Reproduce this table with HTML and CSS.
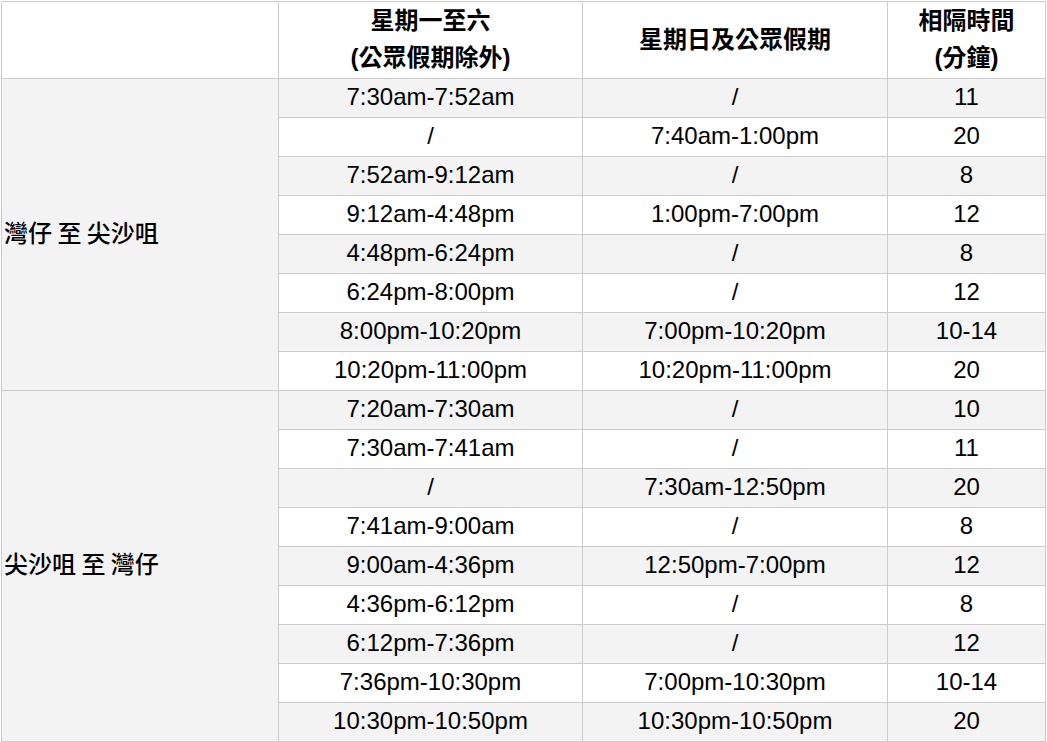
FILE: index.html
```html
<!DOCTYPE html>
<html lang="zh-Hant">
<head>
<meta charset="utf-8">
<title>渡輪班次</title>
<link rel="stylesheet" href="styles.css">
</head>
<body>
<table class="schedule">
  <colgroup>
    <col class="c-route">
    <col class="c-week">
    <col class="c-sun">
    <col class="c-gap">
  </colgroup>
  <thead>
    <tr>
      <th></th>
      <th>星期一至六<br>(公眾假期除外)</th>
      <th>星期日及公眾假期</th>
      <th>相隔時間<br>(分鐘)</th>
    </tr>
  </thead>
  <tbody>
    <tr class="odd"><td class="route" rowspan="8">灣仔 至 尖沙咀</td><td>7:30am-7:52am</td><td>/</td><td>11</td></tr>
    <tr><td>/</td><td>7:40am-1:00pm</td><td>20</td></tr>
    <tr class="odd"><td>7:52am-9:12am</td><td>/</td><td>8</td></tr>
    <tr><td>9:12am-4:48pm</td><td>1:00pm-7:00pm</td><td>12</td></tr>
    <tr class="odd"><td>4:48pm-6:24pm</td><td>/</td><td>8</td></tr>
    <tr><td>6:24pm-8:00pm</td><td>/</td><td>12</td></tr>
    <tr class="odd"><td>8:00pm-10:20pm</td><td>7:00pm-10:20pm</td><td>10-14</td></tr>
    <tr><td>10:20pm-11:00pm</td><td>10:20pm-11:00pm</td><td>20</td></tr>
    <tr class="odd"><td class="route" rowspan="9">尖沙咀 至 灣仔</td><td>7:20am-7:30am</td><td>/</td><td>10</td></tr>
    <tr><td>7:30am-7:41am</td><td>/</td><td>11</td></tr>
    <tr class="odd"><td>/</td><td>7:30am-12:50pm</td><td>20</td></tr>
    <tr><td>7:41am-9:00am</td><td>/</td><td>8</td></tr>
    <tr class="odd"><td>9:00am-4:36pm</td><td>12:50pm-7:00pm</td><td>12</td></tr>
    <tr><td>4:36pm-6:12pm</td><td>/</td><td>8</td></tr>
    <tr class="odd"><td>6:12pm-7:36pm</td><td>/</td><td>12</td></tr>
    <tr><td>7:36pm-10:30pm</td><td>7:00pm-10:30pm</td><td>10-14</td></tr>
    <tr class="odd"><td>10:30pm-10:50pm</td><td>10:30pm-10:50pm</td><td>20</td></tr>
  </tbody>
</table>
</body>
</html>
```

FILE: styles.css
```css
html, body {
  margin: 0;
  padding: 0;
  background: #ffffff;
}

body {
  padding: 1px 0 0 1px;
}

.schedule {
  border-collapse: collapse;
  table-layout: fixed;
  width: 1045px;
  font-family: "Liberation Sans", "Noto Sans CJK TC", Arial, sans-serif;
  font-size: 24px;
  color: #000000;
}

.c-route { width: 277px; }
.c-week { width: 304px; }
.c-sun { width: 305px; }
.c-gap { width: 158px; }

.schedule th,
.schedule td {
  border: 1px solid #cccccc;
  padding: 0 1px 2px;
  line-height: 36px;
  height: 36px;
  text-align: center;
  vertical-align: middle;
  white-space: nowrap;
}

.schedule th {
  font-weight: bold;
  background: #ffffff;
  line-height: 37px;
  height: 74px;
  padding-bottom: 2px;
}

.schedule tbody td {
  background: #ffffff;
}

.schedule tbody tr.odd td {
  background: #f3f3f3;
}

.schedule td.route {
  text-align: left;
  background: #f3f3f3;
  font-family: "Noto Sans CJK TC", sans-serif;
  font-weight: 500;
  padding: 0 1px 6px 2px;
}
```
